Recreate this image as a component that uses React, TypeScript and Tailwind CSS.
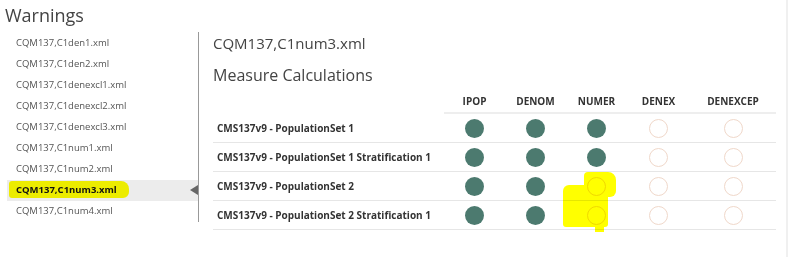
import React from "react";

const files = [
  "CQM137,C1den1.xml",
  "CQM137,C1den2.xml",
  "CQM137,C1denexcl1.xml",
  "CQM137,C1denexcl2.xml",
  "CQM137,C1denexcl3.xml",
  "CQM137,C1num1.xml",
  "CQM137,C1num2.xml",
  "CQM137,C1num3.xml",
  "CQM137,C1num4.xml",
];

const cols = ["IPOP", "DENOM", "NUMER", "DENEX", "DENEXCEP"];

const rows: { label: string; vals: boolean[] }[] = [
  { label: "CMS137v9 - PopulationSet 1", vals: [true, true, true, false, false] },
  { label: "CMS137v9 - PopulationSet 1 Stratification 1", vals: [true, true, true, false, false] },
  { label: "CMS137v9 - PopulationSet 2", vals: [true, true, false, false, false] },
  { label: "CMS137v9 - PopulationSet 2 Stratification 1", vals: [true, true, false, false, false] },
];

function Dot({ on }: { on: boolean }) {
  return on ? (
    <div className="w-[19px] h-[19px] rounded-full bg-[#4c7a6f]" />
  ) : (
    <div className="w-[19px] h-[19px] rounded-full border-[1.5px] border-[#f0d8ca] bg-white" />
  );
}

export default function App() {
  return (
    <div
      className="relative w-[800px] h-[257px] bg-white overflow-hidden flex"
      style={{ fontFamily: '"Open Sans", "Liberation Sans", sans-serif' }}
    >
      <div className="w-[788px] border-r-2 border-[#f0f0f0] flex flex-col">
        <div className="pl-[5px] pt-[2px] h-[32px] text-[18px] leading-[26px] text-[#444]">Warnings</div>
        <div className="flex">
          <div className="w-[199px] border-r border-[#999] h-[190px] pt-[1px] flex flex-col">
            {files.map((f, i) => {
              const sel = i === 7;
              return (
                <div
                  key={f}
                  className={
                    "relative ml-[7px] h-[21px] shrink-0 flex items-center pl-[9px] text-[9.5px] " +
                    (sel ? "bg-[#ececec] text-[#111] font-bold" : "text-[#555]")
                  }
                >
                  {sel && (
                    <div className="absolute left-[2px] top-[1px] w-[120px] h-[17px] bg-[#ffff00] rounded-[3px_8px_6px_3px] mix-blend-multiply" />
                  )}
                  <span className="relative">{f}</span>
                  {sel && (
                    <div className="absolute right-0 top-[5px] w-0 h-0 border-y-[5.5px] border-y-transparent border-r-[8px] border-r-[#666]" />
                  )}
                </div>
              );
            })}
          </div>
          <div className="pl-[14px] relative">
            <div className="text-[15px] leading-[24px] text-[#444] -mt-[1px]">CQM137,C1num3.xml</div>
            <div className="text-[16px] leading-[24px] text-[#444] mt-[8px]">Measure Calculations</div>
            <div className="grid grid-cols-[231px_61px_61px_61px_63px_86px] mt-[3px] text-[10px] text-[#333]">
              <div className="h-[24px]" />
              {cols.map((c) => (
                <div key={c} className="h-[24px] flex items-center justify-center font-bold border-b-2 border-[#eeeeee]">
                  {c}
                </div>
              ))}
              {rows.map((r) => (
                <React.Fragment key={r.label}>
                  <div className="h-[29px] flex items-center pl-[4px] font-bold border-b border-[#e6e6e6]">{r.label}</div>
                  {r.vals.map((v, j) => (
                    <div key={j} className="h-[29px] flex items-center justify-center border-b border-[#e6e6e6]">
                      <Dot on={v} />
                    </div>
                  ))}
                </React.Fragment>
              ))}
            </div>
            <div className="absolute left-[385px] top-[140px] w-[32px] h-[25px] bg-[#ffff00] rounded-[4px_8px_6px_2px] mix-blend-multiply" />
            <div className="absolute left-[364px] top-[153px] w-[45px] h-[42px] bg-[#ffff00] rounded-[6px_2px_3px_3px] mix-blend-multiply" />
            <div className="absolute left-[396px] top-[190px] w-[9px] h-[10px] bg-[#ffff00] mix-blend-multiply" />
          </div>
        </div>
      </div>
    </div>
  );
}
